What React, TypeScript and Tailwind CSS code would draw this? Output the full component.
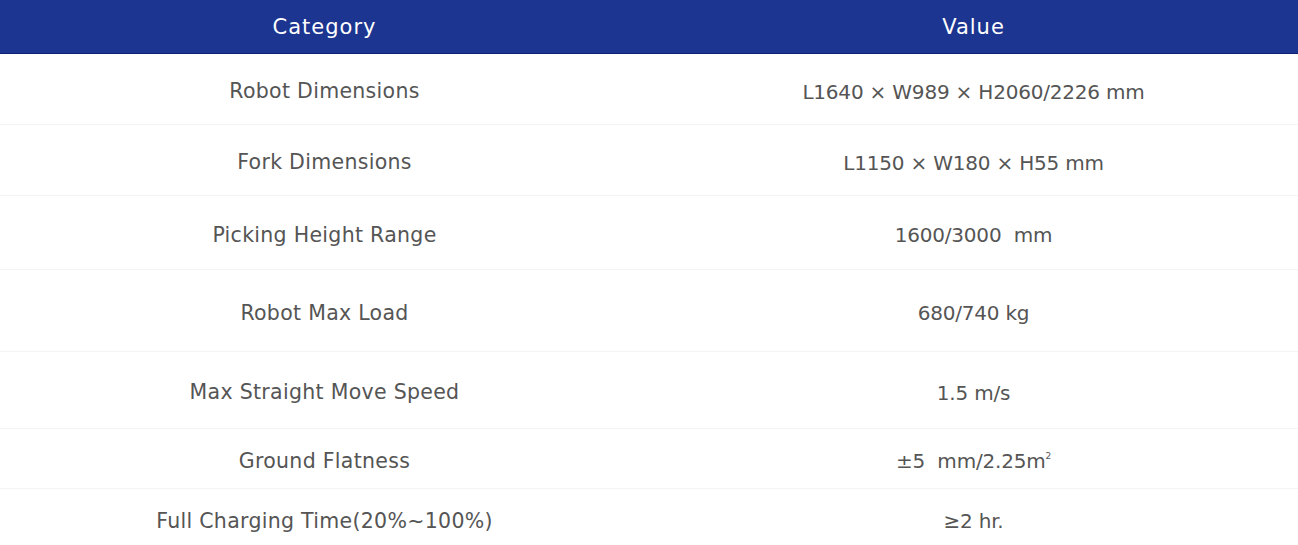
import React from "react";

interface SpecRow {
  label: string;
  value: React.ReactNode;
  height: string;
}

const rows: SpecRow[] = [
  { label: "Robot Dimensions", value: "L1640 × W989 × H2060/2226 mm", height: "h-[71px]" },
  { label: "Fork Dimensions", value: "L1150 × W180 × H55 mm", height: "h-[71px]" },
  { label: "Picking Height Range", value: "1600/3000\u00a0 mm", height: "h-[74px]" },
  { label: "Robot Max Load", value: "680/740 kg", height: "h-[82px]" },
  { label: "Max Straight Move Speed", value: "1.5 m/s", height: "h-[77px]" },
  {
    label: "Ground Flatness",
    value: (
      <>
        ±5&nbsp; mm/2.25m<sup className="text-[9px] relative -top-[5px]">2</sup>
      </>
    ),
    height: "h-[60px]",
  },
  { label: "Full Charging Time(20%~100%)", value: "≥2 hr.", height: "h-[60px]" },
];

export default function App() {
  return (
    <div
      className="w-[1298px] h-[545px] overflow-hidden bg-white"
      style={{ fontFamily: '"DejaVu Sans", "Liberation Sans", sans-serif' }}
    >
      <div className="grid grid-cols-2 h-[54px] bg-[#1b3590] border-b border-[#0f2470] text-white text-[21px] tracking-[1px]">
        <div className="flex items-center justify-center pt-[2px]">Category</div>
        <div className="flex items-center justify-center pt-[2px]">Value</div>
      </div>
      {rows.map((row) => (
        <div
          key={row.label}
          className={`grid grid-cols-2 ${row.height} border-b border-[#f4f4f4] text-[#555]`}
        >
          <div className="flex items-center justify-center pt-[5px] text-[20.5px] tracking-[0.3px]">
            {row.label}
          </div>
          <div className="flex items-center justify-center pt-[5px] text-[20px] tracking-[-0.2px]">
            {row.value}
          </div>
        </div>
      ))}
    </div>
  );
}
